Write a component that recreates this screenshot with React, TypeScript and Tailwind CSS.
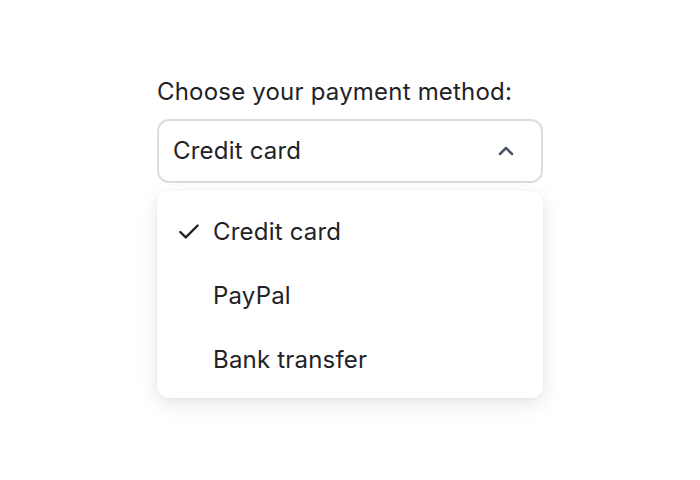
import React from "react";
import { Check, ChevronUp } from "lucide-react";

const options = ["Credit card", "PayPal", "Bank transfer"];

const App: React.FC = () => {
  const selected = "Credit card";

  return (
    <div className="flex min-h-screen w-full justify-center bg-white pt-[76px] font-['Inter',sans-serif] tracking-[0.2px] text-[#1f2328]">
      <div className="w-[386px]">
        <label className="mb-[11px] block text-[24px] leading-[32px]">
          Choose your payment method:
        </label>

        <div className="relative">
          <button
            type="button"
            className="flex h-[64px] w-full items-center justify-between rounded-[12px] border-2 border-[#dadde1] bg-white pl-[14px] pr-[23px] text-left text-[24px] leading-[32px]"
          >
            <span>{selected}</span>
            <ChevronUp className="h-[24px] w-[24px] text-[#4b5563]" strokeWidth={2.5} />
          </button>

          <ul className="absolute left-0 right-0 top-full mt-[8px] rounded-[12px] bg-white pb-[6px] pt-[9px] shadow-[0_6px_20px_rgba(0,0,0,0.10),0_1px_4px_rgba(0,0,0,0.04)]">
            {options.map((opt) => (
              <li
                key={opt}
                className="flex h-[64px] items-center pl-[19px] text-[24px] leading-[32px]"
              >
                <span className="flex w-[37px] items-center">
                  {opt === selected && (
                    <Check className="h-[26px] w-[26px]" strokeWidth={2.2} />
                  )}
                </span>
                <span>{opt}</span>
              </li>
            ))}
          </ul>
        </div>
      </div>
    </div>
  );
};

export default App;
